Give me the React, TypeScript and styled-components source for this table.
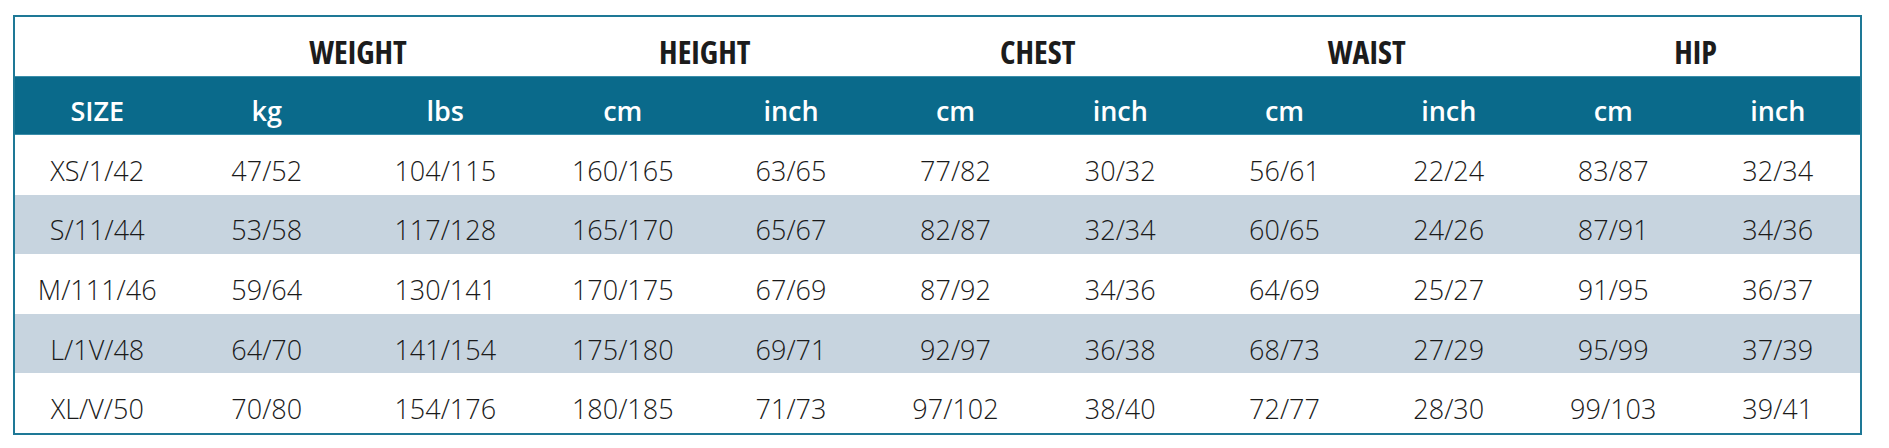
import React from 'react';
import styled, { createGlobalStyle } from 'styled-components';

const GlobalStyle = createGlobalStyle`
    body {
        margin: 0;
        background: #ffffff;
        font-family: "Open Sans", "DejaVu Sans", sans-serif;
    }
`;

const COLS = '164.5px 174.5px 182.5px 172.5px 164px 165px 164.5px 164px 164.5px 164.5px 164.5px';

const Page = styled.div`
    padding: 15px 0 0 13px;
`;

const Sheet = styled.div`
    width: 1845px;
    border: 2px solid #1e7896;
`;

const GroupRow = styled.div`
    display: grid;
    grid-template-columns: ${COLS};
    height: 59px;
    align-items: center;
`;

const GroupCell = styled.div`
    grid-column: span 2;
    text-align: center;
    font-size: 32px;
    font-weight: 700;
    font-stretch: 75%;
    color: #1c1c1c;
    padding-top: 9px;
`;

const UnitRow = styled.div`
    display: grid;
    grid-template-columns: ${COLS};
    height: 59px;
    align-items: center;
    background: #0a6a8b;
    border-top: 1px solid #3b8eaa;
    border-bottom: 1px solid #3b8eaa;
    box-sizing: border-box;
`;

const UnitCell = styled.div`
    text-align: center;
    font-size: 27px;
    font-weight: 600;
    color: #ffffff;
    padding-top: 9px;
`;

const DataRow = styled.div<{ $striped: boolean }>`
    display: grid;
    grid-template-columns: ${COLS};
    height: 59.6px;
    align-items: center;
    background: ${(p) => (p.$striped ? '#c7d4df' : '#ffffff')};
`;

const DataCell = styled.div`
    text-align: center;
    font-size: 27px;
    font-weight: 300;
    color: #1a1a1a;
    padding-top: 11px;
`;

const groups = ['WEIGHT', 'HEIGHT', 'CHEST', 'WAIST', 'HIP'];
const units = ['SIZE', 'kg', 'lbs', 'cm', 'inch', 'cm', 'inch', 'cm', 'inch', 'cm', 'inch'];

const rows: string[][] = [
    ['XS/1/42', '47/52', '104/115', '160/165', '63/65', '77/82', '30/32', '56/61', '22/24', '83/87', '32/34'],
    ['S/11/44', '53/58', '117/128', '165/170', '65/67', '82/87', '32/34', '60/65', '24/26', '87/91', '34/36'],
    ['M/111/46', '59/64', '130/141', '170/175', '67/69', '87/92', '34/36', '64/69', '25/27', '91/95', '36/37'],
    ['L/1V/48', '64/70', '141/154', '175/180', '69/71', '92/97', '36/38', '68/73', '27/29', '95/99', '37/39'],
    ['XL/V/50', '70/80', '154/176', '180/185', '71/73', '97/102', '38/40', '72/77', '28/30', '99/103', '39/41'],
];

const App: React.FC = () => {
    return (
        <Page>
            <GlobalStyle />
            <Sheet>
                <GroupRow>
                    <div />
                    {groups.map((g) => (
                        <GroupCell key={g}>{g}</GroupCell>
                    ))}
                </GroupRow>
                <UnitRow>
                    {units.map((u, i) => (
                        <UnitCell key={i}>{u}</UnitCell>
                    ))}
                </UnitRow>
                {rows.map((r, i) => (
                    <DataRow key={i} $striped={i % 2 === 1}>
                        {r.map((v, j) => (
                            <DataCell key={j}>{v}</DataCell>
                        ))}
                    </DataRow>
                ))}
            </Sheet>
        </Page>
    );
};

export default App;
